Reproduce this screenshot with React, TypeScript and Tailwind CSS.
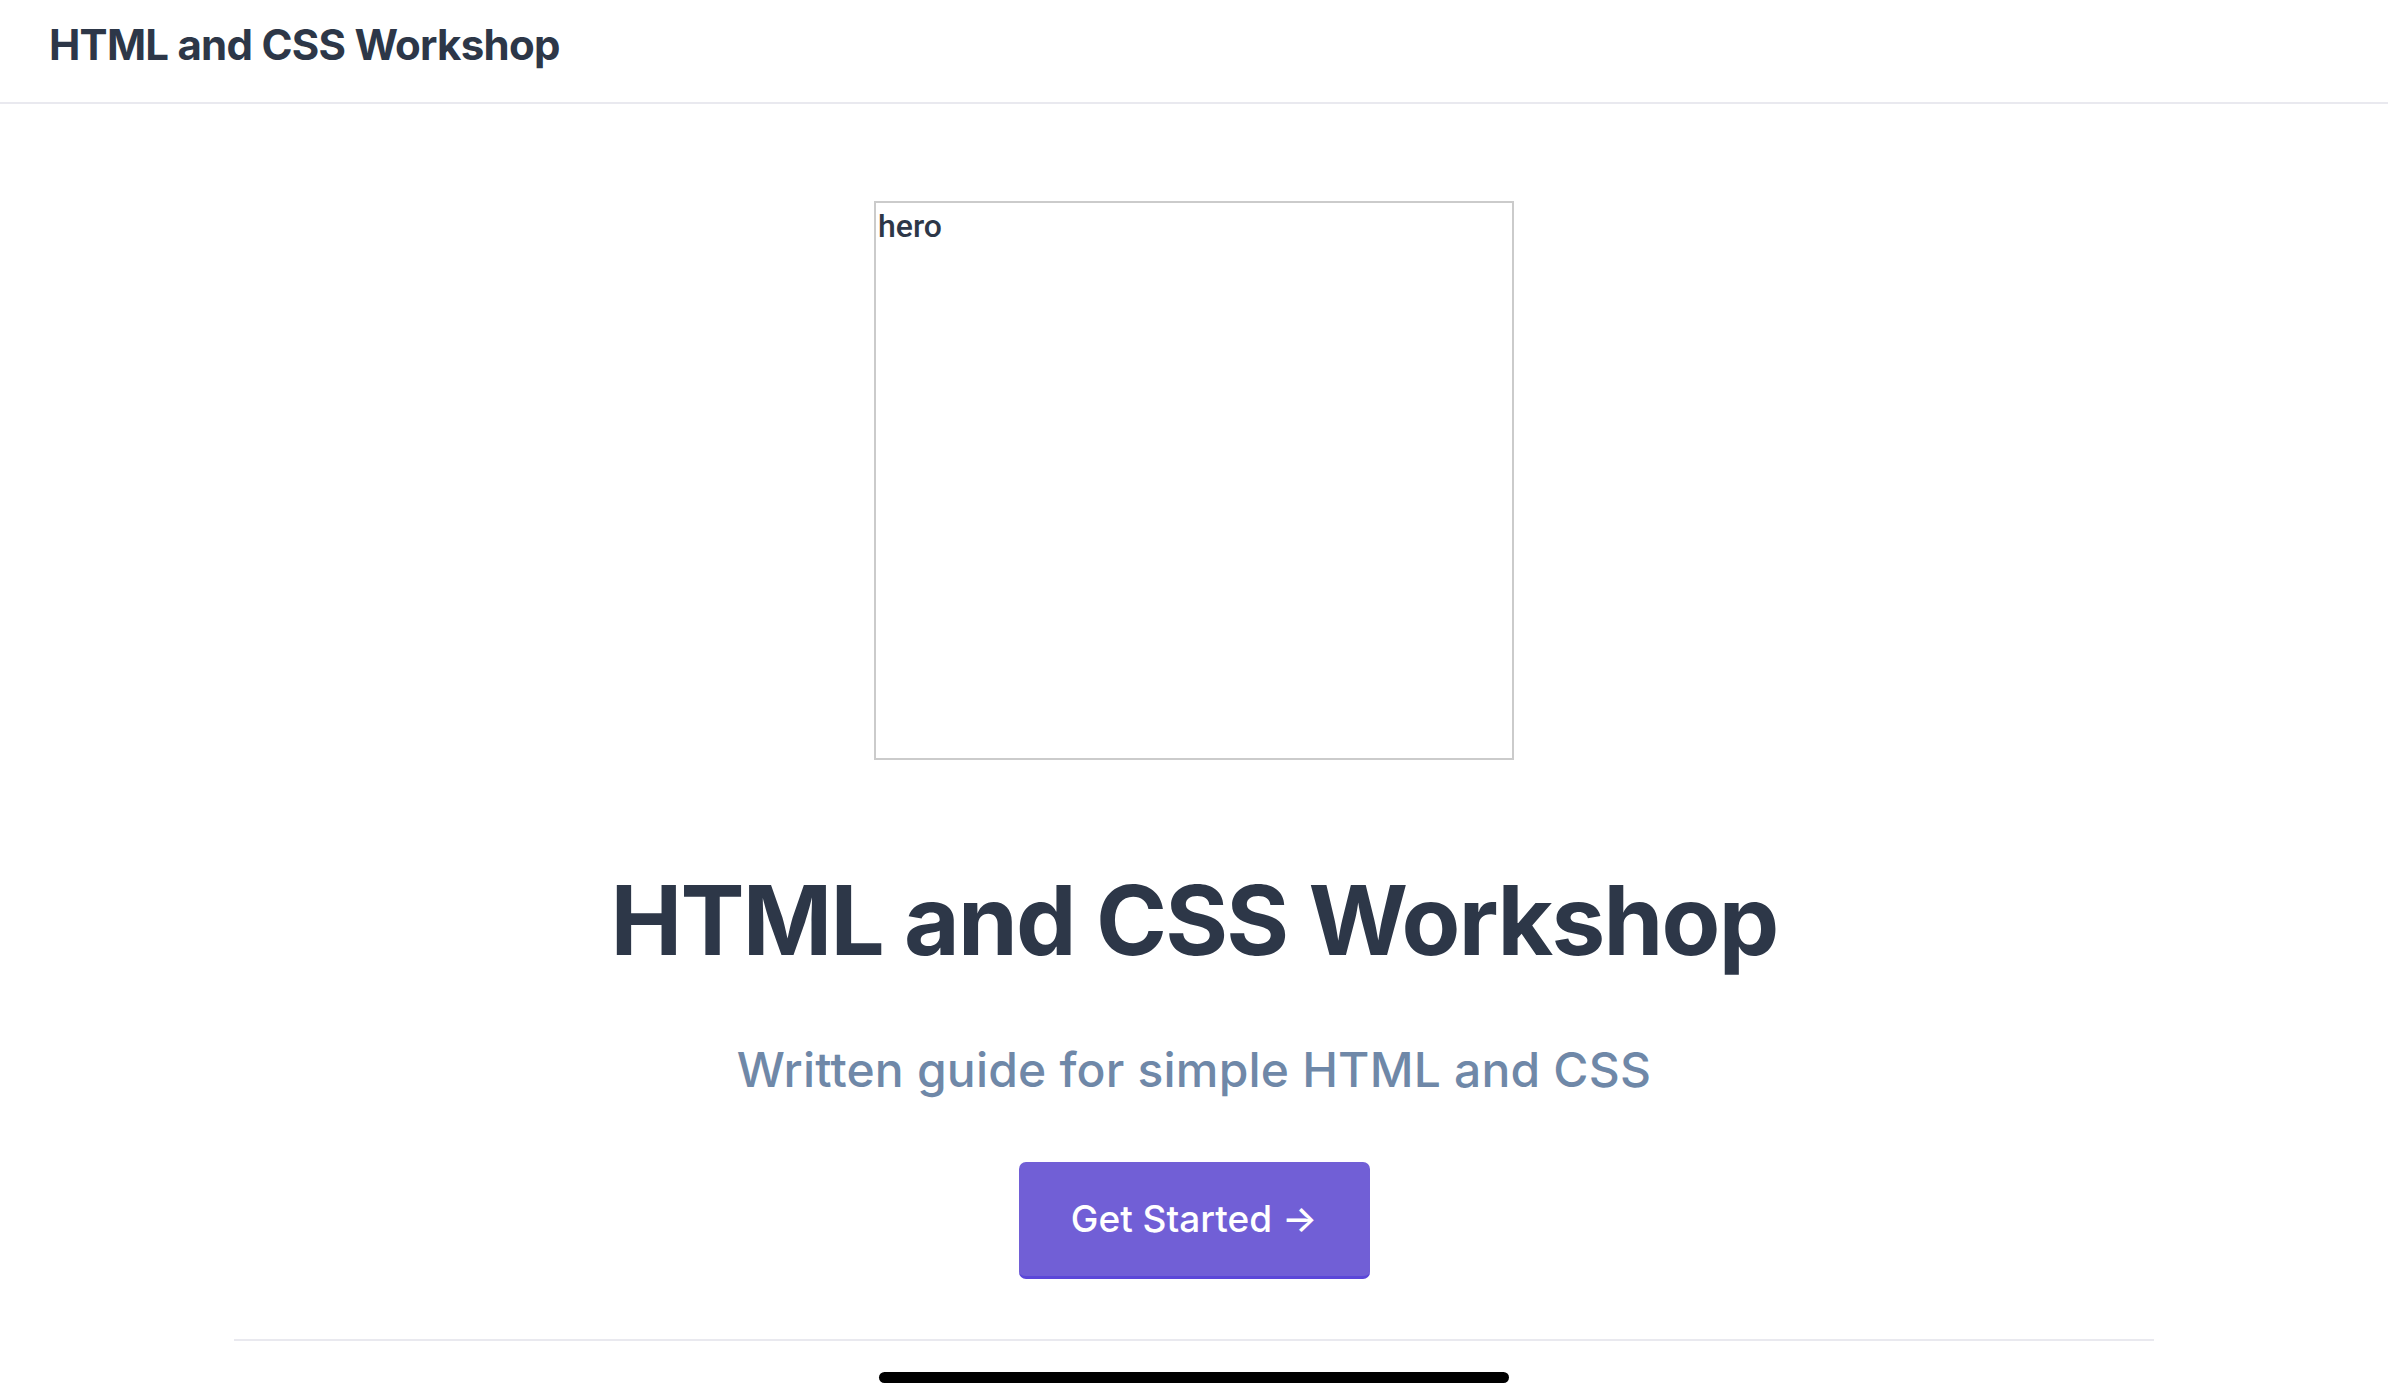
import React from 'react';

export default function App() {
  return (
    <div className="min-h-screen w-full bg-white font-['Inter','Liberation_Sans',sans-serif] text-[#2d3748]">
      {/* Top bar */}
      <header className="h-[104px] border-b-2 border-[#e9e9ef] px-[49px] flex items-center pb-[12px]">
        <span className="text-[42px] font-bold tracking-[-0.018em] leading-none">HTML and CSS Workshop</span>
      </header>

      {/* Hero */}
      <main className="flex flex-col items-center">
        <div className="mt-[97px] w-[640px] h-[559px] border-2 border-[#cbcbcb] px-[2px] pt-[4px]">
          <span className="text-[32px] font-medium leading-[1.2] font-['Roboto','Inter',sans-serif]">hero</span>
        </div>

        <h1 className="mt-[103px] text-[96px] font-bold leading-[1.2] tracking-[-0.018em]">HTML and CSS Workshop</h1>

        <p className="mt-[63px] text-[48px] font-medium leading-[1.2] tracking-[0.004em] text-[#6f88a8]">
          Written guide for simple HTML and CSS
        </p>

        <button className="mt-[63px] h-[117px] w-[351px] justify-center rounded-[7px] bg-[#715fd6] border-b-[3px] border-[#5b47d9] text-white text-[37px] font-medium flex items-center">
          Get Started →
        </button>

        <div className="mt-[60px] w-[1920px] h-[2px] bg-[#e9e9ef]" />

        <div className="mt-[31px] w-[630px] h-[11px] rounded-full bg-black" />
      </main>
    </div>
  );
}
